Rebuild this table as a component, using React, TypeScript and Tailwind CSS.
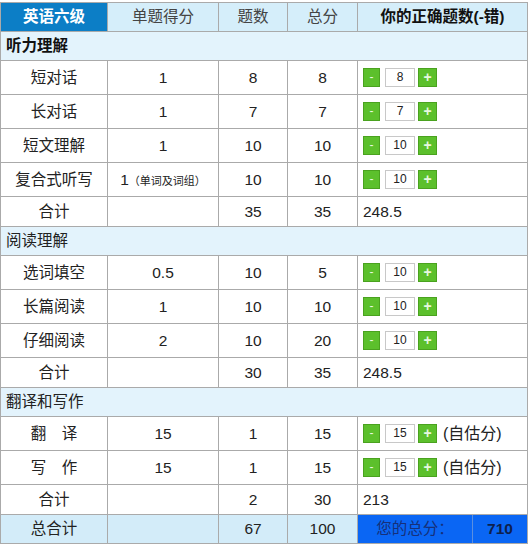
import React from "react";

type Row = { name: string; per?: React.ReactNode; count: number; total: number; val?: number; est?: boolean; sum?: string };

const FONT = { fontFamily: '"Liberation Sans", "Noto Sans CJK SC", sans-serif' };

function Stepper({ value, est }: { value: number; est?: boolean }) {
  return (
    <div className="flex items-center">
      <span className="w-[17px] h-[19px] bg-[#5cc02c] border border-[#4aa21f] text-[#e8f8e0] text-[12px] leading-[17px] text-center">-</span>
      <span className="ml-[5px] w-[30px] h-[19px] bg-white border border-[#c8c8c8] text-[12px] leading-[17px] text-center text-[#222]">{value}</span>
      <span className="ml-[3px] w-[19px] h-[19px] bg-[#5cc02c] border border-[#4aa21f] text-[#e8f8e0] text-[14px] leading-[16px] text-center font-bold">+</span>
      {est && <span className="ml-[6px] text-[16px] text-[#222]">(自估分)</span>}
    </div>
  );
}

const sections: { title: string; bold?: boolean; rows: Row[]; sum: Row }[] = [
  {
    title: "听力理解",
    bold: true,
    rows: [
      { name: "短对话", per: "1", count: 8, total: 8, val: 8 },
      { name: "长对话", per: "1", count: 7, total: 7, val: 7 },
      { name: "短文理解", per: "1", count: 10, total: 10, val: 10 },
      {
        name: "复合式听写",
        per: (
          <span>
            1<span className="text-[11px]">（单词及词组）</span>
          </span>
        ),
        count: 10,
        total: 10,
        val: 10,
      },
    ],
    sum: { name: "合计", count: 35, total: 35, sum: "248.5" },
  },
  {
    title: "阅读理解",
    rows: [
      { name: "选词填空", per: "0.5", count: 10, total: 5, val: 10 },
      { name: "长篇阅读", per: "1", count: 10, total: 10, val: 10 },
      { name: "仔细阅读", per: "2", count: 10, total: 20, val: 10 },
    ],
    sum: { name: "合计", count: 30, total: 35, sum: "248.5" },
  },
  {
    title: "翻译和写作",
    rows: [
      { name: "翻　译", per: "15", count: 1, total: 15, val: 15, est: true },
      { name: "写　作", per: "15", count: 1, total: 15, val: 15, est: true },
    ],
    sum: { name: "合计", count: 2, total: 30, sum: "213" },
  },
];

const td = "border border-[#aaaaaa] text-center p-0";

export default function App() {
  return (
    <div className="bg-white w-[530px] h-[547px] pt-[2px]" style={FONT}>
      <table className="border-collapse table-fixed w-[527px] text-[15.5px] text-[#222]">
        <colgroup>
          <col className="w-[107px]" />
          <col className="w-[111px]" />
          <col className="w-[69px]" />
          <col className="w-[70px]" />
          <col className="w-[170px]" />
        </colgroup>
        <thead>
          <tr className="h-[29px]">
            <th className="border border-[#aaaaaa] bg-[#0c7ec6] text-white font-bold">英语六级</th>
            <th className="border border-[#aaaaaa] bg-[#d5eefa] font-normal text-[#444]">单题得分</th>
            <th className="border border-[#aaaaaa] bg-[#d5eefa] font-normal text-[#444]">题数</th>
            <th className="border border-[#aaaaaa] bg-[#d5eefa] font-normal text-[#444]">总分</th>
            <th className="border border-[#aaaaaa] bg-[#d5eefa] font-bold text-[#111]">你的正确题数(-错)</th>
          </tr>
        </thead>
        <tbody>
          {sections.map((s) => (
            <React.Fragment key={s.title}>
              <tr className="h-[29px] bg-[#e3f3fc]">
                <td colSpan={5} className={`border border-[#aaaaaa] pl-[5px] text-left ${s.bold ? "font-bold text-[#111]" : ""}`}>
                  {s.title}
                </td>
              </tr>
              {s.rows.map((r) => (
                <tr key={r.name} className="h-[34px] bg-white">
                  <td className={td}>{r.name}</td>
                  <td className={td}>{r.per}</td>
                  <td className={td}>{r.count}</td>
                  <td className={td}>{r.total}</td>
                  <td className="border border-[#aaaaaa] pl-[5px]">
                    <Stepper value={r.val!} est={r.est} />
                  </td>
                </tr>
              ))}
              <tr className="h-[30px] bg-white">
                <td className={td}>{s.sum.name}</td>
                <td className={td}></td>
                <td className={td}>{s.sum.count}</td>
                <td className={td}>{s.sum.total}</td>
                <td className="border border-[#aaaaaa] pl-[5px] text-left">{s.sum.sum}</td>
              </tr>
            </React.Fragment>
          ))}
          <tr className="h-[28px] bg-[#d3ecf9]">
            <td className={td}>总合计</td>
            <td className={td}></td>
            <td className={td}>67</td>
            <td className={td}>100</td>
            <td className="border border-[#aaaaaa] p-0 h-[28px]">
              <div className="flex h-full bg-[#0a66f4]">
                <div className="w-[115px] text-center text-[#16307a] leading-[28px] border-r border-[#5a8fe0]">您的总分：</div>
                <div className="flex-1 text-center font-bold text-[#0e1f4d] leading-[28px]">710</div>
              </div>
            </td>
          </tr>
        </tbody>
      </table>
    </div>
  );
}
